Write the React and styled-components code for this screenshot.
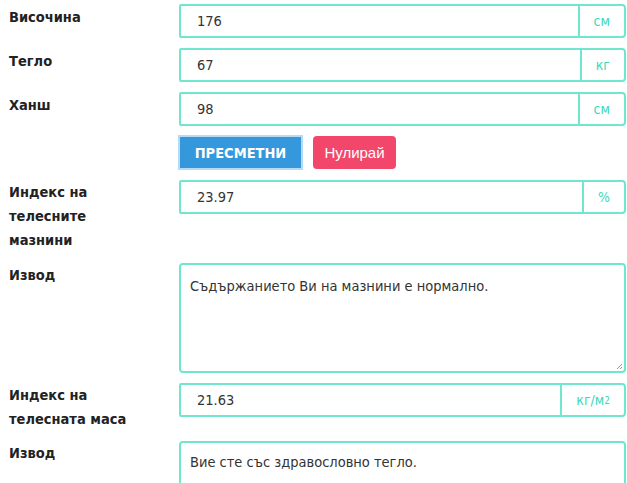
import React from "react";
import styled, { createGlobalStyle } from "styled-components";

const Global = createGlobalStyle`
  html, body { margin: 0; padding: 0; background: #fff; }
  body { font-family: "DejaVu Sans Condensed", "DejaVu Sans", Verdana, sans-serif; }
`;

const Form = styled.div`
  display: grid;
  grid-template-columns: 171px 1fr;
  row-gap: 10px;
  padding: 4px 1px 0 8px;
`;

const Label = styled.div`
  font-weight: bold;
  font-size: 14.5px;
  line-height: 24.2px;
  color: #222;
  padding-top: ${(p) => p.$offset}px;
  padding-left: 1px;
`;

const Group = styled.div`
  display: flex;
  height: 34px;
  box-sizing: border-box;
  border: 2px solid #70e6cf;
  border-radius: 2px 4px 4px 2px;
  background: #fff;
`;

const Field = styled.div`
  flex: 1;
  display: flex;
  align-items: center;
  padding-left: 16px;
  font-size: 14.5px;
  color: #333;
`;

const Addon = styled.div`
  display: flex;
  align-items: center;
  padding: 0 14px;
  border-left: 2px solid #70e6cf;
  font-size: 14px;
  color: #3dd8ba;
  sup {
    font-size: 10px;
    line-height: 0;
    position: relative;
    top: 1px;
    vertical-align: super;
  }
`;

const Buttons = styled.div`
  grid-column: 2;
  display: flex;
  align-items: center;
  gap: 10px;
  margin: -1px 0 0 -1px;
`;

const CalcButton = styled.button`
  height: 35px;
  width: 125px;
  padding: 0;
  border: 2px solid #b6dbf6;
  background: #3598dc;
  color: #fff;
  font-family: "DejaVu Sans Condensed", "DejaVu Sans", Verdana, sans-serif;
  font-weight: bold;
  font-size: 14.5px;
  text-transform: uppercase;
  border-radius: 0;
`;

const ResetButton = styled.button`
  height: 33px;
  width: 83px;
  padding: 0;
  border: none;
  border-radius: 4px;
  background: #f2466a;
  color: #fff;
  font-family: "Liberation Sans", Arial, sans-serif;
  font-size: 15px;
`;

const Area = styled.div`
  position: relative;
  height: ${(p) => p.$h}px;
  box-sizing: border-box;
  border: 2px solid #70e6cf;
  border-radius: 4px;
  padding: ${(p) => p.$pt}px 9px 0 9px;
  font-size: 14.5px;
  color: #333;
`;

const Grip = styled.svg`
  position: absolute;
  right: 1px;
  bottom: 1px;
`;

const Row = ({ label, value, unit }) => (
  <>
    <Label $offset={1}>{label}</Label>
    <Group>
      <Field>{value}</Field>
      <Addon>{unit}</Addon>
    </Group>
  </>
);

export default function App() {
  return (
    <>
      <Global />
      <Form>
        <Row label="Височина" value="176" unit="см" />
        <Row label="Тегло" value="67" unit="кг" />
        <Row label="Ханш" value="98" unit="см" />
        <Buttons>
          <CalcButton>Пресметни</CalcButton>
          <ResetButton>Нулирай</ResetButton>
        </Buttons>
        <Label $offset={0}>
          Индекс на
          <br />
          телесните
          <br />
          мазнини
        </Label>
        <div>
          <Group>
            <Field>23.97</Field>
            <Addon>%</Addon>
          </Group>
        </div>
        <Label $offset={0}>Извод</Label>
        <Area $h={110} $pt={13}>
          Съдържанието Ви на мазнини е нормално.
          <Grip width="8" height="8" viewBox="0 0 8 8">
            <path d="M7 2 L2 7 M7 5 L5 7" stroke="#999" strokeWidth="1" />
          </Grip>
        </Area>
        <Label $offset={0}>
          Индекс на
          <br />
          телесната маса
        </Label>
        <div>
          <Group>
            <Field>21.63</Field>
            <Addon>
              кг/м<sup>2</sup>
            </Addon>
          </Group>
        </div>
        <Label $offset={0}>Извод</Label>
        <Area $h={110} $pt={11}>
          Вие сте със здравословно тегло.
        </Area>
      </Form>
    </>
  );
}
